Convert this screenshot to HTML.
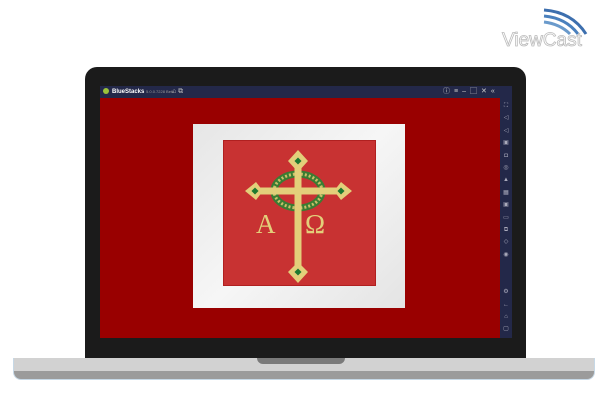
<!DOCTYPE html>
<html><head><meta charset="utf-8"><style>
*{margin:0;padding:0;box-sizing:border-box}
body{width:602px;height:414px;background:#fff;position:relative;overflow:hidden;font-family:"Liberation Sans",sans-serif}
.a{position:absolute}
</style></head><body>
<svg class="a" style="left:500px;top:4px" width="100" height="46" viewBox="0 0 100 46">
<path d="M44 6 Q72 8 86 30" stroke="#3d6fae" stroke-width="3" fill="none"/>
<path d="M44 12 Q66 14 78 30" stroke="#4a80bd" stroke-width="3" fill="none"/>
<path d="M44 18 Q60 20 70 30" stroke="#6a9acb" stroke-width="3" fill="none"/>
<text x="2" y="42" font-size="19" font-family="Liberation Sans" fill="#fff" stroke="#bbb" stroke-width="0.8">ViewCast</text>
</svg>
<div class="a" style="left:85px;top:67px;width:441px;height:293px;background:#1b1b1b;border-radius:12px 12px 0 0"></div>
<div class="a" style="left:100px;top:86px;width:412px;height:12px;background:#232849"></div>
<div class="a" style="left:103px;top:88px;width:6px;height:6px;border-radius:50%;background:#9bc23a"></div>
<div class="a" style="left:112px;top:87px;font-size:6px;color:#fff;font-weight:bold;line-height:9px">BlueStacks <span style="font-weight:normal;color:#999;font-size:4px">5.0.0.7228 Beta</span></div>
<div class="a" style="left:172px;top:87px;font-size:7px;color:#bbb;line-height:9px">⌂ ⧉</div>
<div class="a" style="left:443px;top:87px;font-size:7px;color:#ccc;line-height:9px;letter-spacing:4px">ⓘ≡–▢✕«</div>
<div class="a" style="left:100px;top:98px;width:400px;height:240px;background:#990000"></div>
<div class="a" style="left:500px;top:98px;width:12px;height:240px;background:#232849"></div>
<div class="a" style="left:501px;top:100px;width:10px;font-size:6px;color:#aab;line-height:12.4px;text-align:center">⛶<br>◁<br>◁<br>▣<br>◘<br>◎<br>▲<br>▦<br>▣<br>▭<br>⧉<br>◇<br>◉<br><br><br>⚙<br>←<br>⌂<br>▢</div>
<div class="a" style="left:193px;top:124px;width:212px;height:184px;background:linear-gradient(135deg,#e6e6e6,#f6f6f6 50%,#e4e4e4)"></div>
<div class="a" style="left:223px;top:140px;width:153px;height:146px;background:#c83232;border:1px solid #b02020"></div>
<svg class="a" style="left:223px;top:140px" width="153" height="146" viewBox="223 140 153 146">
<ellipse cx="298" cy="191" rx="24" ry="17" fill="none" stroke="#3a7d33" stroke-width="7"/>
<ellipse cx="298" cy="191" rx="24" ry="17" fill="none" stroke="#c9c06a" stroke-width="3" stroke-dasharray="2 2"/>
<g fill="#e3cf7a">
<rect x="294.5" y="160" width="7" height="110"/>
<rect x="252" y="187.5" width="92" height="7"/>
<polygon points="298,150 308,161 298,172 288,161"/>
<polygon points="298,262 308,272 298,283 288,272"/>
<polygon points="245,191 256,182 263,191 256,200"/>
<polygon points="352,191 341,182 334,191 341,200"/>
</g>
<g fill="#1e7a30">
<rect x="295.5" y="158.5" width="5" height="5" transform="rotate(45 298 161)"/>
<rect x="295.5" y="269.5" width="5" height="5" transform="rotate(45 298 272)"/>
<rect x="252.5" y="188.5" width="5" height="5" transform="rotate(45 255 191)"/>
<rect x="338.5" y="188.5" width="5" height="5" transform="rotate(45 341 191)"/>
</g>
<text x="256" y="233" font-size="27" font-family="Liberation Serif" fill="#e3cf7a">A</text>
<text x="305" y="233" font-size="27" font-family="Liberation Serif" fill="#e3cf7a">Ω</text>
</svg>
<div class="a" style="left:13px;top:358px;width:582px;height:22px;background:#d2d2d2;border-radius:0 0 8px 8px;overflow:hidden;border:1px solid #c6d8e6;border-top:none">
<div class="a" style="left:0;bottom:0;width:100%;height:8px;background:#9b9b9b"></div>
</div>
<div class="a" style="left:257px;top:358px;width:88px;height:6px;background:#7a7a7a;border-radius:0 0 6px 6px"></div>
</body></html>
